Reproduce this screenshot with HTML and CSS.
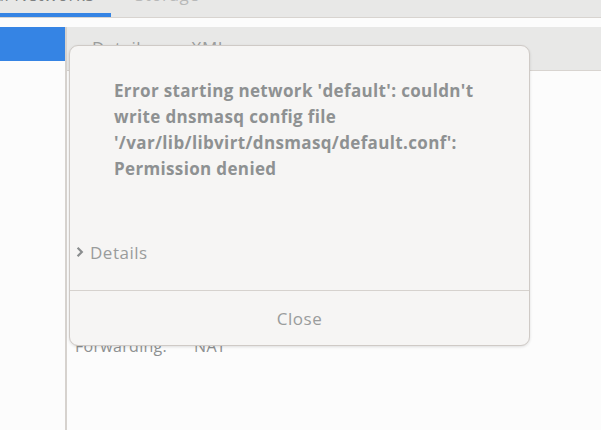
FILE: index.html
```html
<!DOCTYPE html>
<html>
<head>
<meta charset="utf-8">
<link rel="stylesheet" href="styles.css">
</head>
<body>
<div class="tabbar">
  <div class="tab tab-active"><span>Virtual Networks</span></div>
  <div class="tab tab-other"><span>Storage</span></div>
</div>
<div class="strip"></div>
<div class="main">
  <div class="sidebar">
    <div class="row-selected"></div>
  </div>
  <div class="pane">
    <div class="pane-tabs">
      <span class="ptab">Details</span>
      <span class="ptab">XML</span>
    </div>
    <div class="pane-body">
      <div class="field"><span class="label">Forwarding:</span><span>NAT</span></div>
    </div>
  </div>
</div>
<div class="dialog">
  <div class="msg">Error starting network 'default': couldn't write dnsmasq config file '/var/lib/libvirt/dnsmasq/default.conf': Permission denied</div>
  <div class="details">
    <svg class="chev" width="8" height="12" viewBox="0 0 8 12"><path d="M1.6 1.8 L5.8 6 L1.6 10.2" fill="none" stroke="#8a8d8e" stroke-width="2.2"/></svg>
    <span>Details</span>
  </div>
  <div class="actions">Close</div>
</div>
</body>
</html>
```
FILE: styles.css
```css
html, body {
  margin: 0;
  padding: 0;
}
body {
  width: 601px;
  height: 430px;
  overflow: hidden;
  background: #fcfcfc;
  font-family: "Open Sans", "Noto Sans", sans-serif;
  letter-spacing: 0.5px;
  position: relative;
}
.tabbar {
  height: 17px;
  background: #e8e8e7;
  border-bottom: 1px solid #d8d4d0;
  display: flex;
  overflow: hidden;
}
.tab {
  box-sizing: border-box;
  height: 17px;
  font-size: 17px;
  overflow: hidden;
  white-space: nowrap;
  display: flex;
}
.tab span {
  display: block;
  margin-top: -15px;
  line-height: 20px;
  flex: none;
}
.tab-active {
  width: 111px;
  border-bottom: 4px solid #3584e4;
  color: #7d8081;
  justify-content: flex-end;
  padding-right: 17px;
}
.tab-other {
  margin-left: 24px;
  color: #b8b9b9;
}
.strip {
  height: 9px;
  background: #fcfcfc;
}
.main {
  display: flex;
  height: 403px;
}
.sidebar {
  width: 65px;
  background: #fcfcfc;
  border-right: 2px solid #d6d2ce;
}
.row-selected {
  height: 34px;
  background: #3584e4;
}
.pane {
  flex: 1;
  display: flex;
  flex-direction: column;
}
.pane-tabs {
  height: 44px;
  background: #e8e8e7;
  border-bottom: 1px solid #d8d4d0;
  display: flex;
  gap: 42px;
  padding-left: 25px;
  font-size: 17px;
  color: #9a9c9c;
  line-height: 42px;
  box-sizing: border-box;
}
.pane-body {
  flex: 1;
  padding: 265px 0 0 8px;
  box-sizing: border-box;
}
.field {
  font-size: 16px;
  letter-spacing: 0.3px;
  color: #8e9192;
  line-height: 20px;
  display: flex;
  gap: 27px;
}
.dialog {
  position: absolute;
  left: 69px;
  top: 45px;
  width: 461px;
  height: 301px;
  box-sizing: border-box;
  background: #f6f5f4;
  border: 1px solid #cfcac6;
  border-radius: 9px;
  box-shadow: 0 1px 3px rgba(0,0,0,0.12);
  display: flex;
  flex-direction: column;
}
.msg {
  padding: 32px 0 0 44px;
  width: 430px;
  font-size: 17px;
  font-weight: bold;
  letter-spacing: 0.35px;
  line-height: 26px;
  color: #8e9192;
  height: 186px;
  box-sizing: border-box;
}
.details {
  display: flex;
  align-items: center;
  gap: 6px;
  padding-left: 6px;
  font-size: 17px;
  color: #9a9c9c;
  height: 58px;
  box-sizing: border-box;
  padding-bottom: 28px;
  padding-top: 10px;
}
.chev {
  display: block;
}
.actions {
  flex: 1;
  border-top: 1px solid #d6d2ce;
  display: flex;
  align-items: center;
  justify-content: center;
  font-size: 17px;
  color: #9a9c9c;
}
```
